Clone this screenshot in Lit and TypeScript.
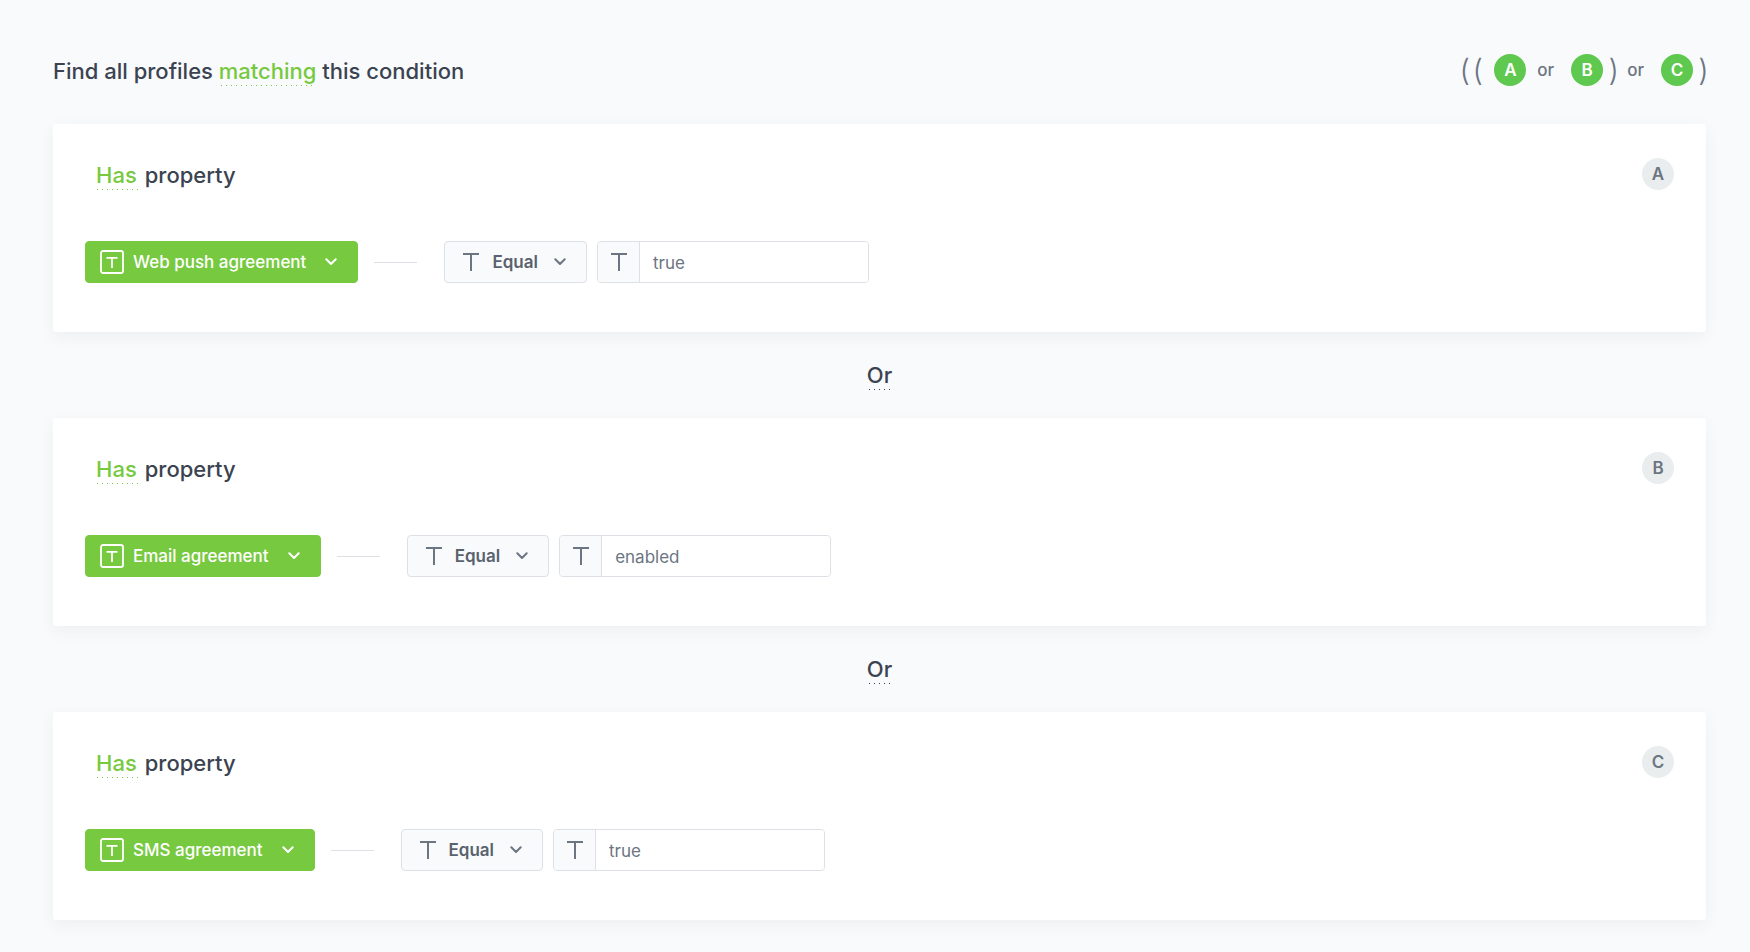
import { LitElement, html, css, svg } from "lit";
import { customElement, property, state } from "lit/decorators.js";

interface Condition {
  key: string;
  attribute: string;
  operator: string;
  value: string;
}

const chevron = html`<svg class="chevron" viewBox="0 0 12 8" width="12" height="8" aria-hidden="true">
  <path d="M1.3 1.3 6 6 10.7 1.3" fill="none" stroke="currentColor" stroke-width="2" stroke-linecap="round" stroke-linejoin="round" />
</svg>`;

const letterT = svg`<path d="M1 2H17M9 2V19" fill="none" stroke="currentColor" stroke-width="2" />`;

const typeIcon = html`<svg class="type" viewBox="0 0 18 20" width="18" height="20" aria-hidden="true">${letterT}</svg>`;

const boxedIcon = html`<svg class="type" viewBox="0 0 24 24" width="24" height="24" aria-hidden="true">
  <rect x="1" y="1" width="22" height="22" rx="2" fill="none" stroke="currentColor" stroke-width="1.8" />
  <path d="M6.5 7.8H17.5M12 7.8V18" fill="none" stroke="currentColor" stroke-width="1.8" />
</svg>`;

@customElement("condition-card")
export class ConditionCard extends LitElement {
  @property({ attribute: false }) condition!: Condition;

  static styles = css`
    :host {
      display: block;
      padding: 34px 32px 49px;
      background: #fff;
      border-radius: 3px;
      box-shadow: 0 5px 16px rgba(60, 65, 75, 0.06);
    }
    .head {
      display: flex;
      align-items: center;
      justify-content: space-between;
      height: 32px;
      margin-bottom: 51px;
      padding-left: 11px;
    }
    .title {
      display: flex;
      gap: 6px;
      margin: 0;
      padding-top: 2px;
      font-size: 22px;
      line-height: 28px;
      font-weight: 500;
    }
    .toggle {
      padding: 0 2px 1px 0;
      margin-bottom: -1px;
      border: 0;
      font: inherit;
      color: #77c93f;
      cursor: pointer;
      background: repeating-linear-gradient(90deg, #77c93f 0 1px, transparent 1px 5px) 1px 100% / 100% 1px no-repeat;
    }
    .badge {
      display: grid;
      place-items: center;
      width: 32px;
      height: 32px;
      border-radius: 50%;
      background: #e9eded;
      color: #6c7582;
      font-size: 17px;
      font-weight: 600;
    }
    .row {
      display: flex;
      align-items: center;
    }
    .picker {
      display: inline-grid;
      align-items: center;
      height: 42px;
      color: #59626e;
    }
    .picker > * {
      grid-area: 1 / 1;
    }
    .picker > svg {
      pointer-events: none;
      color: #6c7582;
    }
    .type {
      margin-left: 18px;
    }
    .chevron {
      justify-self: end;
      margin-right: 21px;
    }
    .select {
      field-sizing: content;
      appearance: none;
      height: 42px;
      padding: 0 48px 0 47px;
      border: 1px solid #dde0e4;
      border-radius: 4px;
      background: #f9fafc;
      color: inherit;
      font: inherit;
      font-size: 17px;
      font-weight: 600;
      cursor: pointer;
    }
    .attribute .select {
      padding-right: 51px;
      border-color: #77c93f;
      background: #77c93f;
      color: #fff;
      font-weight: 500;
    }
    .attribute > svg {
      color: #fff;
    }
    .attribute .type {
      margin-left: 15px;
    }
    .link {
      width: 43px;
      height: 1px;
      margin: 0 27px 0 16px;
      background: #dde0e4;
    }
    .value {
      display: flex;
      box-sizing: border-box;
      width: 272px;
      height: 42px;
      margin-left: 10px;
      border: 1px solid #dde0e4;
      border-radius: 4px;
      overflow: hidden;
    }
    .prefix {
      display: grid;
      align-items: center;
      width: 41px;
      flex: none;
      background: #f9fafc;
      border-right: 1px solid #dde0e4;
      color: #6c7582;
    }
    .prefix .type {
      margin-left: 12px;
    }
    .input {
      flex: 1;
      min-width: 0;
      padding: 2px 13px 0;
      border: 0;
      outline: 0;
      background: #fff;
      color: #6c7582;
      font: inherit;
      font-size: 17px;
    }
  `;

  render() {
    const c = this.condition;
    return html`
      <div class="head">
        <h2 class="title"><button class="toggle" type="button">Has</button><span>property</span></h2>
        <span class="badge">${c.key}</span>
      </div>
      <div class="row">
        <div class="picker attribute">
          <select class="select" aria-label="Property">
            <option>${c.attribute}</option>
          </select>
          ${boxedIcon}${chevron}
        </div>
        <span class="link"></span>
        <div class="picker">
          <select class="select" aria-label="Operator">
            <option>${c.operator}</option>
          </select>
          ${typeIcon}${chevron}
        </div>
        <label class="value">
          <span class="prefix">${typeIcon}</span>
          <input class="input" type="text" aria-label="Value" .value=${c.value} />
        </label>
      </div>
    `;
  }
}

@customElement("app-root")
export class AppRoot extends LitElement {
  @state() private conditions: Condition[] = [
    { key: "A", attribute: "Web push agreement", operator: "Equal", value: "true" },
    { key: "B", attribute: "Email agreement", operator: "Equal", value: "enabled" },
    { key: "C", attribute: "SMS agreement", operator: "Equal", value: "true" },
  ];

  static styles = css`
    :host {
      display: block;
      box-sizing: border-box;
      min-height: 100vh;
      padding: 54px 44px 32px 53px;
      background: #f9fafc;
      color: #3b4351;
      font-family: Inter, "Liberation Sans", sans-serif;
    }
    .top {
      display: flex;
      align-items: center;
      justify-content: space-between;
      height: 32px;
      margin-bottom: 38px;
    }
    .heading {
      margin: 0;
      padding-top: 3px;
      font-size: 22px;
      line-height: 28px;
      font-weight: 500;
    }
    .toggle {
      padding: 0 0 1px;
      border: 0;
      color: #77c93f;
      font: inherit;
      cursor: pointer;
      background: repeating-linear-gradient(90deg, currentColor 0 1px, transparent 1px 5px) 2px 100% / 100% 1px no-repeat;
    }
    .dark {
      color: #3b4351;
    }
    .formula {
      display: flex;
      align-items: center;
      color: #6c7582;
      font-size: 17px;
      font-weight: 600;
    }
    .paren {
      font-size: 30px;
      line-height: 32px;
      font-weight: 300;
      width: 5px;
      display: flex;
      justify-content: center;
    }
    .paren + .paren {
      margin-left: 8px;
    }
    .term {
      display: grid;
      place-items: center;
      width: 32px;
      height: 32px;
      border-radius: 50%;
      background: #5fc84f;
      color: #fff;
    }
    .open + .term {
      margin-left: 14px;
    }
    .term + .close {
      margin-left: 8px;
    }
    .or {
      margin: 0 17px 0 11px;
      font-weight: 500;
    }
    .joint {
      display: flex;
      align-items: center;
      justify-content: center;
      height: 86px;
      font-size: 22px;
      line-height: 28px;
      font-weight: 500;
    }
  `;

  render() {
    return html`
      <header class="top">
        <h1 class="heading">
          Find all profiles <button class="toggle" type="button">matching</button> this condition
        </h1>
        <div class="formula">
          <span class="paren open">(</span><span class="paren open">(</span>
          <span class="term">A</span><span class="or">or</span><span class="term">B</span>
          <span class="paren close">)</span><span class="or">or</span><span class="term">C</span>
          <span class="paren close">)</span>
        </div>
      </header>
      <main>
        ${this.conditions.map(
          (c, i) => html`
            ${i ? html`<div class="joint"><button class="toggle dark" type="button">Or</button></div>` : ""}
            <condition-card .condition=${c}></condition-card>
          `
        )}
      </main>
    `;
  }
}
